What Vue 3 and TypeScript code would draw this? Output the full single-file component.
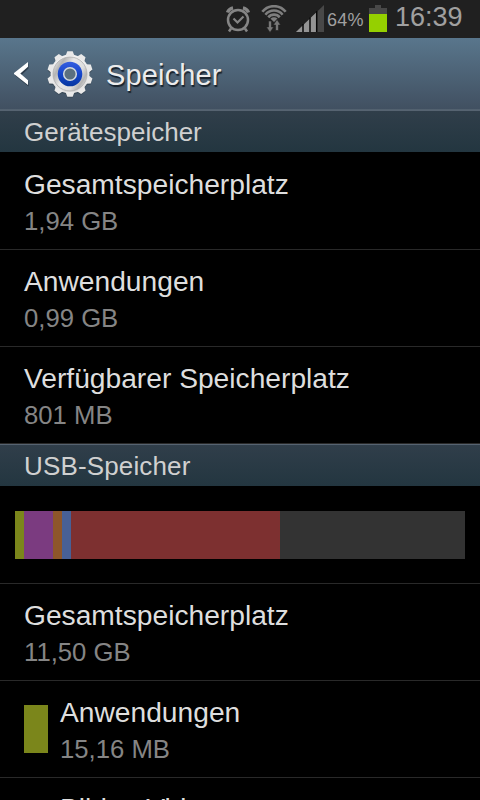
<script setup lang="ts">
interface Entry { title: string; value: string; color?: string }
interface Segment { color: string; size: number }

const device: Entry[] = [
  { title: 'Gesamtspeicherplatz', value: '1,94 GB' },
  { title: 'Anwendungen', value: '0,99 GB' },
  { title: 'Verfügbarer Speicherplatz', value: '801 MB' },
]
const usb: Entry[] = [
  { title: 'Gesamtspeicherplatz', value: '11,50 GB' },
  { title: 'Anwendungen', value: '15,16 MB', color: '#7b861b' },
]
const segments: Segment[] = [
  { color: '#7b861b', size: 9 },
  { color: '#7b3b80', size: 29 },
  { color: '#8e562a', size: 9 },
  { color: '#486095', size: 9 },
  { color: '#7d3030', size: 209 },
]
const teeth: number[] = Array.from({ length: 10 }, (_, i) => i * 36)
</script>

<template>
  <div class="screen">
    <header class="status">
      <svg class="alarm" width="26" height="28" viewBox="0 0 26 28" fill="none" stroke="#858585">
        <circle cx="13" cy="15" r="10" stroke-width="2.5" />
        <path d="M8.500 13.500l4 4 6-6" stroke-width="2.2" />
        <path d="M2.500 7.500Q4 3.500 8 2.800M23.500 7.500Q22 3.500 18 2.800" stroke-width="3.4" />
        <path d="M6 23.500l-2 3M20 23.500l2 3" stroke-width="2.5" />
      </svg>
      <svg class="wifi" width="28" height="30" viewBox="0 0 28 30" fill="none" stroke="#7e7e7e" stroke-width="2.6">
        <path d="M2.300 6.800A15 15 0 0 1 25.700 6.800M5.400 9.700A11 11 0 0 1 22.600 9.700M8.300 12.400A7.300 7.300 0 0 1 19.700 12.400" />
        <path d="M10.500 13.800A5 5 0 0 1 17.500 13.800L14 17Z" fill="#7e7e7e" stroke="none" />
        <path d="M8.500 16h3v6h2.200L10 27.500 6.300 22h2.200zM15.500 25.500V20h-2.200L17 14.500 20.700 20h-2.200v5.500z" fill="#777" stroke="#202020" stroke-width=".6" />
      </svg>
      <svg class="signal" width="29" height="27" viewBox="0 0 29 27">
        <path d="M0 27L28 0V27Z" fill="#484848" />
        <path d="M0 27L21 6.750V27Z" fill="#949494" />
        <path d="M7 19v8M14 12.500v14.500M20.700 6v21" stroke="#080808" stroke-width="1.500" />
      </svg>
      <span class="percent">64%</span>
      <svg class="battery" width="18" height="27" viewBox="0 0 18 27">
        <path d="M6 0h6v3h6v24H0V3h6z" fill="#484848" />
        <path d="M0 9h18v18H0z" fill="#95d000" />
      </svg>
      <span class="clock">16:39</span>
    </header>

    <nav class="bar">
      <svg class="back" width="16" height="26" viewBox="0 0 16 26">
        <path d="M14.500 1.500V6.500L7.500 13L14.500 19.500V24.500L1 13.500V12.500Z" fill="#263341" opacity=".8" />
        <path d="M14 0V4.800L6.300 11.500L14 18.200V23L0 12V11Z" fill="#fff" />
      </svg>
      <svg class="gear" width="48" height="50" viewBox="0 0 48 50">
        <defs>
          <linearGradient id="rim" x1="0" y1="0" x2="0" y2="1">
            <stop offset="0" stop-color="#f4f4f4" /><stop offset="1" stop-color="#dedede" />
          </linearGradient>
          <linearGradient id="metal" x1="0" y1="0.2" x2="1" y2="0.8">
            <stop offset="0" stop-color="#e8e8e8" /><stop offset=".18" stop-color="#b4b4b4" />
            <stop offset=".4" stop-color="#e8e8e8" /><stop offset=".7" stop-color="#dedede" />
            <stop offset=".86" stop-color="#b4b4b4" /><stop offset="1" stop-color="#e8e8e8" />
          </linearGradient>
          <linearGradient id="blue" x1="0" y1="0" x2="0" y2="1">
            <stop offset="0" stop-color="#365fe0" /><stop offset=".5" stop-color="#1646ca" /><stop offset="1" stop-color="#0637a0" />
          </linearGradient>
        </defs>
        <g fill="#394957" transform="translate(24 25.2)">
          <circle r="19.500" />
          <path v-for="a in teeth" :key="a" d="M-4.500-18L-2.700-22.500H2.700L4.500-18Z" :transform="`rotate(${a})`" />
        </g>
        <g fill="url(#rim)" transform="translate(24 24)">
          <circle r="19.500" />
          <path v-for="a in teeth" :key="a" fill="#e9e9e9" d="M-4.500-18L-2.700-22.700H2.700L4.500-18Z" :transform="`rotate(${a})`" />
        </g>
        <circle cx="24" cy="24" r="17" fill="url(#metal)" stroke="#adadad" stroke-width=".8" />
        <circle cx="24" cy="24" r="12.300" fill="url(#blue)" />
        <circle cx="24" cy="24" r="6.300" fill="#5b7080" stroke="#d4dade" stroke-width="1.500" />
      </svg>
      <h1>Speicher</h1>
    </nav>

    <h2 class="section first"><span>Gerätespeicher</span></h2>
    <section v-for="row in device" :key="row.title" class="row">
      <div class="copy"><div class="title">{{ row.title }}</div><div class="value">{{ row.value }}</div></div>
    </section>

    <h2 class="section second"><span>USB-Speicher</span></h2>
    <div class="usage">
      <div class="meter"><i v-for="s in segments" :key="s.color" :style="{ width: s.size + 'px', background: s.color }"></i></div>
    </div>
    <section v-for="row in usb" :key="row.title" class="row">
      <i v-if="row.color" class="swatch" :style="{ background: row.color }"></i>
      <div class="copy"><div class="title">{{ row.title }}</div><div class="value">{{ row.value }}</div></div>
    </section>
    <section class="row next">
      <div class="copy"><div class="title">Bilder, Videos</div></div>
    </section>
  </div>
</template>

<style>
body { background: #000; overflow: hidden; }
</style>
<style scoped>
.screen { width: 480px; height: 800px; overflow: hidden; background: #000; color: #dedede; font-family: "Liberation Sans", Arial, sans-serif; }
.status { display: flex; height: 38px; box-sizing: border-box; padding: 5px 0 0 225px; background: #202020; color: #a0a0a0; }
.status svg, .status span { flex: none; }
.wifi { margin-left: 9px; }
.signal { margin-left: 8px; }
.percent { width: 39px; margin-left: 2px; padding-top: 5px; font-size: 18px; letter-spacing: 0.2px; line-height: 21px; }
.battery { margin-left: 3px; }
.clock { margin-left: 8px; margin-top: -4px; font-size: 27px; line-height: 32px; }
.bar { display: flex; height: 72px; box-sizing: border-box; background: linear-gradient(#59768c, #415061); border-bottom: 1px solid #52616f; padding-top: 12px; }
.back { margin: 12px 0 0 14px; }
.gear { margin-left: 16px; }
h1 { margin: 8px 0 0 12px; font-size: 29px; font-weight: 400; letter-spacing: 0.15px; line-height: 34px; color: #ececec; text-shadow: 1px 2px 1px #17212b; }
.section { height: 42px; box-sizing: border-box; margin: 0; padding: 6px 24px 0; border-top: 1px solid #566371; background: linear-gradient(#303e4a, #233640); color: #d0d0d0; font-size: 26px; font-weight: 400; line-height: 30px; }
.first { margin-bottom: 1px; }
.second { letter-spacing: 0.15px; }
.row { display: flex; height: 97px; box-sizing: border-box; border-bottom: 1px solid #292929; padding-left: 24px; }
.copy { padding-top: 13px; }
.title { height: 38px; font-size: 28.2px; line-height: 36px; white-space: nowrap; }
.value { color: #858585; font-size: 25.7px; line-height: 34px; }
.swatch { width: 24px; height: 48px; margin: 24px 12px 0 0; }
.next { padding-left: 60px; }
.next .copy { padding-top: 12px; }
.usage { height: 98px; box-sizing: border-box; padding: 25px 15px; border-bottom: 1px solid #292929; }
.meter { display: flex; height: 48px; background: #333; }
</style>
